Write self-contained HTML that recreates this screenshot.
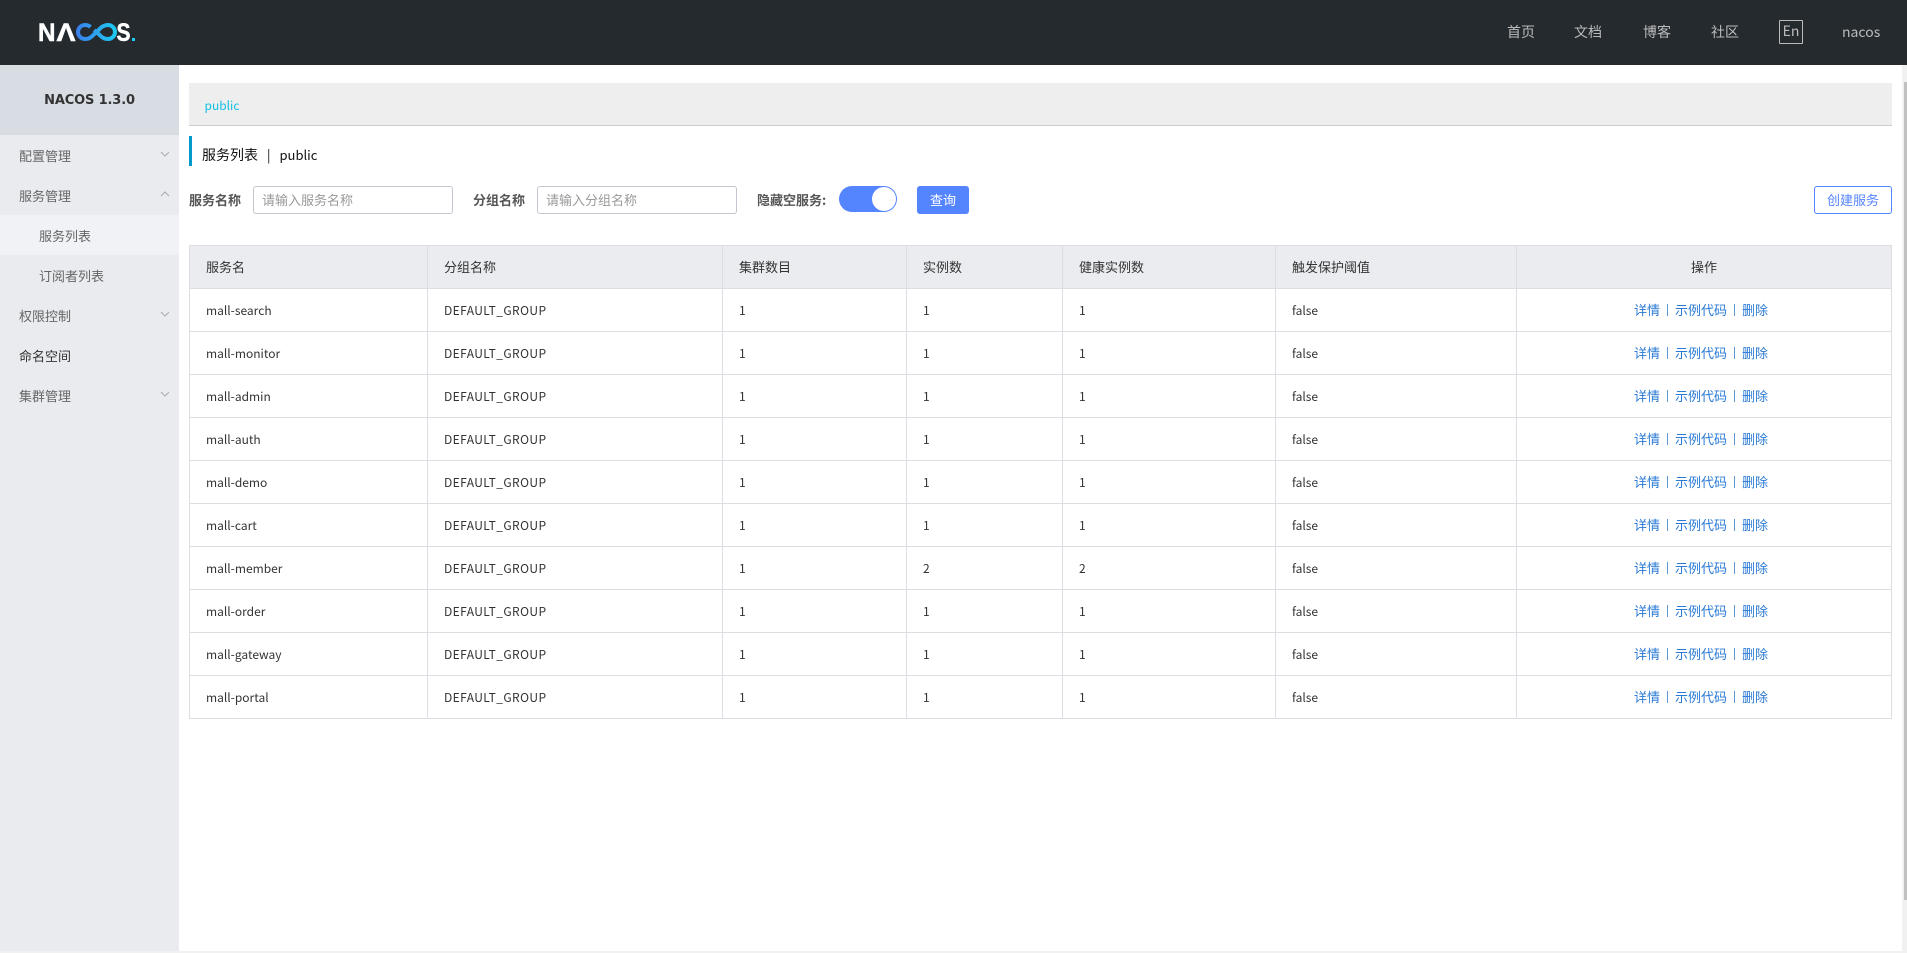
<!DOCTYPE html>
<html lang="zh">
<head>
<meta charset="utf-8">
<title>Nacos</title>
<style>
*{box-sizing:border-box}
html,body{margin:0;padding:0;width:1907px;height:953px;overflow:hidden;background:#fff}
body{font-family:"Noto Sans CJK SC","Liberation Sans",sans-serif;font-size:13px;color:#333;position:relative}
.abs{position:absolute;white-space:nowrap}
#hd{position:absolute;left:0;top:0;width:1907px;height:65px;background:#252a2f}
#hd .n{position:absolute;top:21px;font-size:14px;line-height:22px;color:#bbb}
#en{position:absolute;left:1779px;top:20px;width:24px;height:24px;border:1px solid #bbb;border-radius:1px;color:#bbb;font-size:14px;line-height:20px;text-align:center}
#sb{position:absolute;left:0;top:65px;width:179px;height:888px;background:#e9ebef}
#ver{height:70px;background:#d8dde4;text-align:center;font-family:"DejaVu Sans",sans-serif;font-weight:bold;font-size:13px;line-height:72px;color:#333;letter-spacing:-.15px}
.mi{height:40px;line-height:42px;padding-left:19px;color:#666;position:relative;font-size:13px}
.mi.sub{padding-left:39px}
.mi.on{background:#f0f2f6}
.mi.dark{color:#333}
.mi svg{position:absolute;left:160px;top:14px}
#crumb{position:absolute;left:189px;top:83px;width:1703px;height:43px;background:#eee;border-bottom:1px solid #ccc;padding-left:15.5px;font-size:12px;line-height:46px;color:#10bfe6}
#tt{position:absolute;left:189px;top:136px;width:3px;height:30px;background:#09c}
.tx{position:absolute;top:144px;font-size:14px;line-height:22px;color:#111;white-space:nowrap}
.lb{position:absolute;top:186px;line-height:28px;font-weight:bold;color:#555;font-size:13px}
.ip{position:absolute;top:186px;width:200px;height:28px;border:1px solid #c4c6cf;border-radius:3px;padding-left:8px;line-height:25px;color:#999;font-size:13px;background:#fff}
#sw{position:absolute;left:839px;top:186px;width:58px;height:26px;border-radius:13px;background:#5584ff}
#sw i{position:absolute;right:1px;top:1px;width:24px;height:24px;border-radius:50%;background:#fff}
#q{position:absolute;left:917px;top:186px;width:52px;height:28px;border-radius:3px;background:#5584ff;color:#fff;text-align:center;line-height:28px;font-size:13px}
#cr{position:absolute;left:1814px;top:186px;width:78px;height:28px;border-radius:3px;border:1px solid #5584ff;color:#5584ff;text-align:center;line-height:26px;font-size:13px}
table{position:absolute;left:189px;top:245px;width:1703px;table-layout:fixed;border-collapse:separate;border-spacing:0;border-top:1px solid #dcdee3;border-left:1px solid #dcdee3;font-size:12px}
th,td{height:43px;padding:0 0 0 16px;border-right:1px solid #dcdee3;border-bottom:1px solid #dcdee3;text-align:left;font-weight:normal;line-height:18px;color:#333;white-space:nowrap;overflow:hidden}
td{padding-top:2px}
td:nth-child(2){letter-spacing:.42px}
th{background:#ebecf0;font-size:13px}
th:last-child{text-align:center;padding:0;font-size:13px}
td:last-child{text-align:center;padding:0 6px 0 0;font-size:13px;color:#2a7ad6}
td b{display:inline-block;width:1px;height:12px;margin:0 7px;background:#5f97d0;vertical-align:-1px}
#st{position:absolute;left:1902px;top:65px;width:5px;height:888px;background:#f1f1f1}
#th{position:absolute;left:1904px;top:82px;width:3px;height:818px;background:#c1c1c1}
#bt{position:absolute;left:0;top:951px;width:1902px;height:2px;background:#f1f1f1}
</style>
</head>
<body>
<div id="hd">
<svg style="position:absolute;left:0;top:0" width="150" height="65" aria-label="NACOS.">
<defs><linearGradient id="g" gradientUnits="userSpaceOnUse" x1="76" y1="0" x2="117" y2="0"><stop offset="0" stop-color="#3b7dea"/><stop offset="1" stop-color="#1dcdf2"/></linearGradient></defs>
<g font-family="Liberation Sans" font-weight="bold" font-size="25" fill="#fff" stroke="#fff" stroke-width=".5">
<text x="38" y="41" textLength="17.5" lengthAdjust="spacingAndGlyphs">N</text>
<text x="56.5" y="41" textLength="19" lengthAdjust="spacingAndGlyphs">Λ</text>
<text x="116.5" y="41" textLength="14" lengthAdjust="spacingAndGlyphs">S</text>
</g>
<path d="M90.5 27 C89 25.6 87.2 25 85 25 C81.1 25 78 28.1 78 32 C78 35.9 81.1 39 85 39 C91 39 93.5 34.5 96.5 32 C99.5 29.5 102 25 108 25 C111.9 25 115 28.1 115 32 C115 35.9 111.9 39 108 39 C102 39 99.5 34.5 96.5 32 C95.8 31.4 95 30.7 94.2 30" fill="none" stroke="url(#g)" stroke-width="4"/>
<rect x="132" y="38" width="3" height="3" fill="#1dcdf2"/>
</svg>
<div class="n" style="left:1507px">首页</div>
<div class="n" style="left:1574px">文档</div>
<div class="n" style="left:1643px">博客</div>
<div class="n" style="left:1711px">社区</div>
<div id="en">En</div>
<div class="n" style="left:1842px">nacos</div>
</div>
<div id="sb">
<div id="ver">NACOS 1.3.0</div>
<div class="mi">配置管理<svg width="10" height="10" viewBox="0 0 10 10"><path d="M1 3l4 4 4-4" fill="none" stroke="#aaa" stroke-width="1"/></svg></div>
<div class="mi">服务管理<svg width="10" height="10" viewBox="0 0 10 10"><path d="M1 7l4-4 4 4" fill="none" stroke="#aaa" stroke-width="1"/></svg></div>
<div class="mi sub on">服务列表</div>
<div class="mi sub">订阅者列表</div>
<div class="mi">权限控制<svg width="10" height="10" viewBox="0 0 10 10"><path d="M1 3l4 4 4-4" fill="none" stroke="#aaa" stroke-width="1"/></svg></div>
<div class="mi dark">命名空间</div>
<div class="mi">集群管理<svg width="10" height="10" viewBox="0 0 10 10"><path d="M1 3l4 4 4-4" fill="none" stroke="#aaa" stroke-width="1"/></svg></div>
</div>
<div id="crumb">public</div>
<div id="tt"></div>
<div class="tx" style="left:202px">服务列表</div>
<div class="tx" style="left:267px;font-size:13px">|</div>
<div class="tx" style="left:279.5px;font-size:13px">public</div>
<div class="lb" style="left:189px">服务名称</div>
<div class="ip" style="left:253px">请输入服务名称</div>
<div class="lb" style="left:473px">分组名称</div>
<div class="ip" style="left:537px">请输入分组名称</div>
<div class="lb" style="left:757px">隐藏空服务:</div>
<div id="sw"><i></i></div>
<div id="q">查询</div>
<div id="cr">创建服务</div>
<table>
<colgroup><col style="width:238px"><col style="width:295px"><col style="width:184px"><col style="width:156px"><col style="width:213px"><col style="width:241px"><col style="width:375px"></colgroup>
<tr><th>服务名</th><th>分组名称</th><th>集群数目</th><th>实例数</th><th>健康实例数</th><th>触发保护阈值</th><th>操作</th></tr>
<tr><td>mall-search</td><td>DEFAULT_GROUP</td><td>1</td><td>1</td><td>1</td><td>false</td><td>详情<b></b>示例代码<b></b>删除</td></tr>
<tr><td>mall-monitor</td><td>DEFAULT_GROUP</td><td>1</td><td>1</td><td>1</td><td>false</td><td>详情<b></b>示例代码<b></b>删除</td></tr>
<tr><td>mall-admin</td><td>DEFAULT_GROUP</td><td>1</td><td>1</td><td>1</td><td>false</td><td>详情<b></b>示例代码<b></b>删除</td></tr>
<tr><td>mall-auth</td><td>DEFAULT_GROUP</td><td>1</td><td>1</td><td>1</td><td>false</td><td>详情<b></b>示例代码<b></b>删除</td></tr>
<tr><td>mall-demo</td><td>DEFAULT_GROUP</td><td>1</td><td>1</td><td>1</td><td>false</td><td>详情<b></b>示例代码<b></b>删除</td></tr>
<tr><td>mall-cart</td><td>DEFAULT_GROUP</td><td>1</td><td>1</td><td>1</td><td>false</td><td>详情<b></b>示例代码<b></b>删除</td></tr>
<tr><td>mall-member</td><td>DEFAULT_GROUP</td><td>1</td><td>2</td><td>2</td><td>false</td><td>详情<b></b>示例代码<b></b>删除</td></tr>
<tr><td>mall-order</td><td>DEFAULT_GROUP</td><td>1</td><td>1</td><td>1</td><td>false</td><td>详情<b></b>示例代码<b></b>删除</td></tr>
<tr><td>mall-gateway</td><td>DEFAULT_GROUP</td><td>1</td><td>1</td><td>1</td><td>false</td><td>详情<b></b>示例代码<b></b>删除</td></tr>
<tr><td>mall-portal</td><td>DEFAULT_GROUP</td><td>1</td><td>1</td><td>1</td><td>false</td><td>详情<b></b>示例代码<b></b>删除</td></tr>
</table>
<div id="st"></div><div id="th"></div><div id="bt"></div>
</body>
</html>
